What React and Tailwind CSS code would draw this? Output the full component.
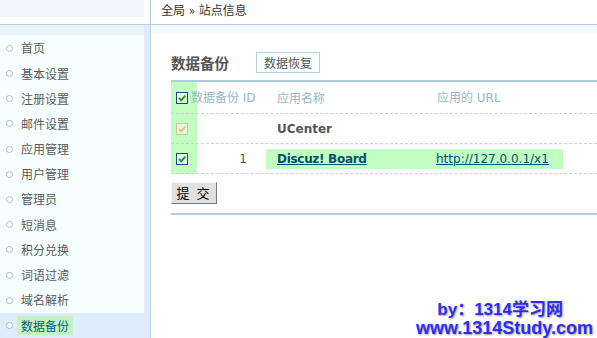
const menu = [
  '首页',
  '基本设置',
  '注册设置',
  '邮件设置',
  '应用管理',
  '用户管理',
  '管理员',
  '短消息',
  '积分兑换',
  '词语过滤',
  '域名解析',
  '数据备份',
]

function CheckBox({ disabled }) {
  return (
    <svg width="12" height="12" viewBox="0 0 12 12" className="block">
      <rect
        x="0.5"
        y="0.5"
        width="11"
        height="11"
        fill={disabled ? '#eef3dc' : '#e6f6e6'}
        stroke={disabled ? '#c9c993' : '#1d4f7c'}
      />
      <path
        d="M3 5.8 L5.2 8.3 L9.3 3.6"
        fill="none"
        stroke={disabled ? '#c9c993' : '#10a010'}
        strokeWidth="1.8"
      />
    </svg>
  )
}

export default function App() {
  return (
    <div className="relative w-[597px] h-[338px] overflow-hidden bg-white flex font-['DejaVu_Sans','Noto_Sans_CJK_SC',sans-serif] text-[12px]">
      {/* Sidebar */}
      <div className="w-[150px] flex flex-col">
        <div className="h-[25px] border-b border-[#b5cfe0]">
          <div className="w-[144px] h-[17px] bg-[#eef6ff]" />
        </div>
        <div className="flex-1 flex">
          <div className="w-[144px] bg-[#f6ffff] flex flex-col">
            <div className="h-[10px] bg-[#e9f4ff]" />
            <ul className="pt-[1px]">
              {menu.map((item, idx) => {
                const active = idx === menu.length - 1
                return (
                  <li
                    key={item}
                    className={
                      'h-[25.2px] flex items-center pl-[6px] ' +
                      (active ? 'bg-[#ddedfc]' : '')
                    }
                  >
                    <span className="w-[7px] h-[7px] rounded-full border border-[#b8b8b8] bg-white" />
                    {active ? (
                      <span className="ml-[4px] px-[4px] h-[19px] leading-[19px] bg-[#c4f2c4] text-[#00607e] font-['Noto_Sans_CJK_SC',sans-serif]">
                        {item}
                      </span>
                    ) : (
                      <span className="ml-[8px] text-[#5a5a5a] font-['Noto_Sans_CJK_SC',sans-serif]">
                        {item}
                      </span>
                    )}
                  </li>
                )
              })}
            </ul>
          </div>
          <div className="w-[6px] bg-[#dcecfc]" />
        </div>
      </div>

      {/* Main */}
      <div className="flex-1 border-l border-[#b5cfe0] flex flex-col">
        <div className="h-[25px] border-b border-[#b5cfe0] pl-[10px] pt-[1px] text-[#333] font-['Noto_Sans_CJK_SC',sans-serif]">
          全局<span className="mx-[4px]">»</span>站点信息
        </div>
        <div className="h-[8px] bg-[#f3f9ff]" />

        <div className="pl-[20px]">
          {/* Heading */}
          <div className="mt-[19px] h-[21px] flex items-center">
            <h3 className="text-[14.5px] font-bold text-[#555] font-['Noto_Sans_CJK_SC',sans-serif]">数据备份</h3>
            <button className="ml-[27px] h-[21px] w-[64px] border border-[#b5d0dc] bg-[#f9ffff] text-[#555] font-['Noto_Sans_CJK_SC',sans-serif]">
              数据恢复
            </button>
          </div>

          {/* Table */}
          <div className="mt-[7px] border-t-2 border-[#aecbd9] bg-[linear-gradient(to_right,#c2fec2_26px,transparent_26px)] w-[426px]">
            <div className="h-[32px] flex items-center border-b border-dashed border-[#cfcfcf] text-[#97b6c6]">
              <div className="w-[26px] pl-[5px] pt-[1px]">
                <CheckBox />
              </div>
              <div className="w-[69px] -ml-[6px] whitespace-nowrap">
                <span className="font-['Noto_Sans_CJK_SC',sans-serif]">数据备份</span> ID
              </div>
              <div className="w-[160px] pl-[17px] font-['Noto_Sans_CJK_SC',sans-serif]">应用名称</div>
              <div className="pl-[17px] whitespace-nowrap">
                <span className="font-['Noto_Sans_CJK_SC',sans-serif]">应用的</span> URL
              </div>
            </div>

            <div className="h-[30px] flex items-center border-b border-dashed border-[#cfcfcf]">
              <div className="w-[26px] pl-[5px]">
                <CheckBox disabled />
              </div>
              <div className="w-[69px]" />
              <div className="pl-[11px] font-bold text-[#555] text-[12px]">UCenter</div>
            </div>

            <div className="h-[30px] flex items-center border-b border-dashed border-[#cfcfcf]">
              <div className="w-[26px] pl-[5px]">
                <CheckBox />
              </div>
              <div className="w-[69px] text-right pr-[19px] text-[#555]">1</div>
              <div className="w-[297px] h-[20px] bg-[#c2fec2] flex items-center">
                <a className="w-[160px] pl-[11px] font-bold text-[#00506e] underline text-[12px] tracking-[-0.3px]">
                  Discuz! Board
                </a>
                <a className="pl-[10px] text-[#00506e] underline">http://127.0.0.1/x1</a>
              </div>
            </div>
          </div>

          <button className="mt-[8px] w-[46px] h-[22px] bg-[#e0e0e0] border border-t-[#f4f4f4] border-l-[#f4f4f4] border-r-[#7a7a7a] border-b-[#7a7a7a] text-[13px] tracking-[2px] text-black font-['Noto_Sans_CJK_SC',sans-serif]">
            提 交
          </button>

          <div className="mt-[9px] w-[426px] border-t-2 border-[#b5cfe0]" />
        </div>
      </div>

      {/* Watermark */}
      <div className="absolute right-[4px] bottom-[0px] text-right font-bold text-[#2d2df5] leading-[20px] [text-shadow:1px_1px_2px_#9a9a9a] font-['Liberation_Sans','Noto_Sans_CJK_SC',sans-serif]">
        <div className="text-[17px] pr-[30px] translate-y-[2px]">by：1314学习网</div>
        <div className="text-[18px]">www.1314Study.com</div>
      </div>
    </div>
  )
}
